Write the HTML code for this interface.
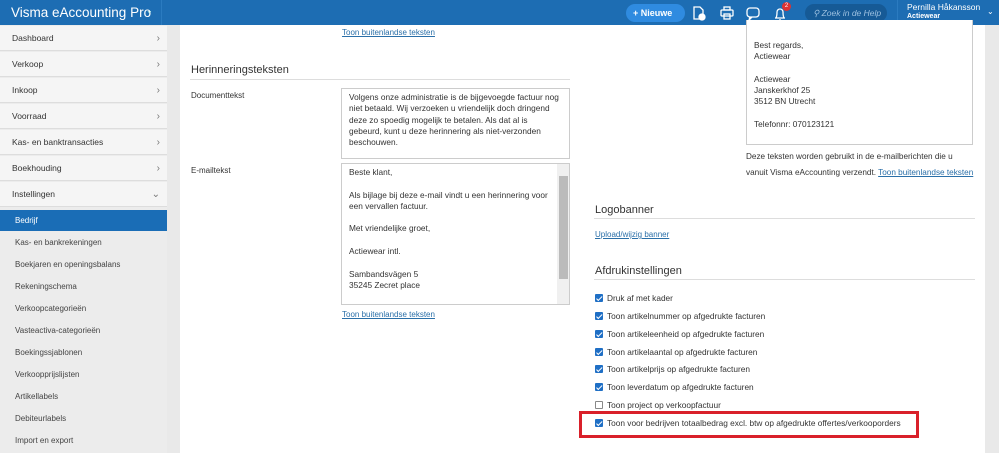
<!DOCTYPE html>
<html><head><meta charset="utf-8"><style>
*{box-sizing:border-box;margin:0;padding:0}
body{width:999px;height:453px;overflow:hidden;font-family:"Liberation Sans",sans-serif;font-size:9px;color:#333;background:#e9e9e9;position:relative}
.abs{position:absolute}
.hdr{left:0;top:0;width:999px;height:25px;background:#1d6db3}
.side{left:0;top:25px;width:167px;height:428px;background:#ececec}
.it{position:absolute;left:0;width:167px;height:25px;background:#f5f5f5;border-bottom:1px solid #ddd;padding-left:12px;line-height:25px;font-size:8.5px;color:#333}
.it span{position:absolute;right:7px;top:0;color:#777;font-size:10px}
.sub{position:absolute;left:15px;font-size:8px;color:#444}
.main{left:180px;top:25px;width:805px;height:428px;background:#fff}
.lnk{color:#2a6fa8;text-decoration:underline;font-size:8px;position:absolute}
.h{position:absolute;font-size:11px;color:#333}
.ln{position:absolute;height:1px;background:#ddd}
.ta{position:absolute;border:1px solid #ccc;background:#fff;font-size:8.3px;line-height:11.3px;padding:3px 7px;color:#333;overflow:hidden}
.cb{position:absolute;left:595px;font-size:8.3px;color:#333}
.cb i{display:inline-block;width:8px;height:8px;background:#1f6fc5;border-radius:1px;vertical-align:-1px;margin-right:4px;position:relative}
.cb i:after{content:"";position:absolute;left:2.5px;top:0.5px;width:2px;height:4.5px;border:solid #fff;border-width:0 1.3px 1.3px 0;transform:rotate(45deg)}
.cb i.e{background:#fff;border:1px solid #888}
.cb i.e:after{display:none}
</style></head><body>
<div class="abs hdr">
 <div class="abs" style="left:11px;top:5px;color:#fff;font-size:13.5px">Visma eAccounting Pro</div>
 <div class="abs" style="left:146px;top:6px;color:#cfe;font-size:8px">⌄</div>
 <div class="abs" style="left:161px;top:0;width:1px;height:25px;background:#2b7bc0"></div>
 <div class="abs" style="left:626px;top:4px;width:59px;height:18px;border-radius:9px;background:#2f8be0;color:#fff;font-size:9px;font-weight:bold;line-height:18px;padding-left:7px">+ Nieuwe</div>
 <svg class="abs" style="left:691px;top:4px" width="100" height="18" viewBox="0 0 100 18" fill="none" stroke="#fff" stroke-width="1.3">
  <path d="M3 3h6l3 3v9H3z"/><circle cx="11" cy="13" r="3" fill="#fff"/>
  <rect x="30" y="6" width="12" height="6" rx="1"/><rect x="33" y="3" width="6" height="3"/><rect x="33" y="10" width="6" height="5"/>
  <rect x="56" y="4" width="12" height="9" rx="3"/><path d="M59 13l-1 3 3-3"/>
  <path d="M84 14h10M85 14c1-2 1-4 1-6a3 3 0 0 1 6 0c0 2 0 4 1 6M88 16h2"/>
 </svg>
 <div class="abs" style="left:782px;top:2px;width:9px;height:9px;border-radius:50%;background:#d33;color:#fff;font-size:6px;text-align:center;line-height:9px">2</div>
 <div class="abs" style="left:805px;top:4px;width:82px;height:18px;border-radius:9px;background:#165a96;color:#9cc0e0;font-size:8.5px;font-style:italic;line-height:18px;padding-left:8px">⚲ Zoek in de Help</div>
 <div class="abs" style="left:897px;top:0;width:1px;height:25px;background:#2b7bc0"></div>
 <div class="abs" style="left:907px;top:2px;color:#fff;font-size:8.5px">Pernilla Håkansson</div>
 <div class="abs" style="left:907px;top:13px;color:#fff;font-size:7px;font-weight:bold">Actiewear</div>
 <div class="abs" style="left:987px;top:7px;color:#fff;font-size:8px">⌄</div>
</div>
<div class="abs side">
 <div class="it" style="top:1px">Dashboard<span>›</span></div>
 <div class="it" style="top:27px">Verkoop<span>›</span></div>
 <div class="it" style="top:53px">Inkoop<span>›</span></div>
 <div class="it" style="top:79px">Voorraad<span>›</span></div>
 <div class="it" style="top:105px">Kas- en banktransacties<span>›</span></div>
 <div class="it" style="top:131px">Boekhouding<span>›</span></div>
 <div class="it" style="top:157px">Instellingen<span>⌄</span></div>
 <div class="abs" style="left:0;top:185px;width:167px;height:21px;background:#1a6db6;color:#fff;padding-left:15px;line-height:21px;font-size:8px">Bedrijf</div>
 <div class="sub" style="top:213px">Kas- en bankrekeningen</div>
 <div class="sub" style="top:235px">Boekjaren en openingsbalans</div>
 <div class="sub" style="top:257px">Rekeningschema</div>
 <div class="sub" style="top:279px">Verkoopcategorieën</div>
 <div class="sub" style="top:301px">Vasteactiva-categorieën</div>
 <div class="sub" style="top:323px">Boekingssjablonen</div>
 <div class="sub" style="top:345px">Verkoopprijslijsten</div>
 <div class="sub" style="top:367px">Artikellabels</div>
 <div class="sub" style="top:389px">Debiteurlabels</div>
 <div class="sub" style="top:411px">Import en export</div>
</div>
<div class="abs main"></div>
<div class="lnk" style="left:342px;top:28px">Toon buitenlandse teksten</div>
<div class="h" style="left:191px;top:64px">Herinneringsteksten</div>
<div class="ln" style="left:190px;top:79px;width:380px"></div>
<div class="abs" style="left:191px;top:91px;font-size:8px">Documenttekst</div>
<div class="ta" style="left:341px;top:88px;width:229px;height:71px;padding-top:3px">Volgens onze administratie is de bijgevoegde factuur nog niet betaald. Wij verzoeken u vriendelijk doch dringend deze zo spoedig mogelijk te betalen. Als dat al is gebeurd, kunt u deze herinnering als niet-verzonden beschouwen.</div>
<div class="abs" style="left:191px;top:166px;font-size:8px">E-mailtekst</div>
<div class="ta" style="left:341px;top:163px;width:229px;height:142px;padding-right:20px">Beste klant,<br><br>Als bijlage bij deze e-mail vindt u een herinnering voor een vervallen factuur.<br><br>Met vriendelijke groet,<br><br>Actiewear intl.<br><br>Sambandsvägen 5<br>35245 Zecret place<br><br>Tel.: 070123121</div>
<div class="abs" style="left:557px;top:164px;width:12px;height:140px;background:#f0f0f0"></div>
<div class="abs" style="left:559px;top:176px;width:9px;height:103px;background:#bbb"></div>
<div class="lnk" style="left:342px;top:310px">Toon buitenlandse teksten</div>

<div class="ta" style="left:746px;top:20px;width:227px;height:125px;border-top:none;padding-top:20px">Best regards,<br>Actiewear<br><br>Actiewear<br>Janskerkhof 25<br>3512 BN Utrecht<br><br>Telefonnr: 070123121</div>
<div class="abs" style="left:746px;top:149px;width:228px;font-size:8.2px;line-height:16px">Deze teksten worden gebruikt in de e-mailberichten die u vanuit Visma eAccounting verzendt. <span style="color:#2a6fa8;text-decoration:underline">Toon buitenlandse teksten</span></div>

<div class="h" style="left:595px;top:204px">Logobanner</div>
<div class="ln" style="left:594px;top:218px;width:381px"></div>
<div class="lnk" style="left:595px;top:230px">Upload/wijzig banner</div>
<div class="h" style="left:595px;top:265px">Afdrukinstellingen</div>
<div class="ln" style="left:594px;top:279px;width:381px"></div>
<div class="cb" style="top:293px"><i></i>Druk af met kader</div>
<div class="cb" style="top:311px"><i></i>Toon artikelnummer op afgedrukte facturen</div>
<div class="cb" style="top:329px"><i></i>Toon artikeleenheid op afgedrukte facturen</div>
<div class="cb" style="top:347px"><i></i>Toon artikelaantal op afgedrukte facturen</div>
<div class="cb" style="top:364px"><i></i>Toon artikelprijs op afgedrukte facturen</div>
<div class="cb" style="top:382px"><i></i>Toon leverdatum op afgedrukte facturen</div>
<div class="cb" style="top:400px"><i class="e"></i>Toon project op verkoopfactuur</div>
<div class="cb" style="top:418px"><i></i>Toon voor bedrijven totaalbedrag excl. btw op afgedrukte offertes/verkooporders</div>
<div class="abs" style="left:579px;top:411px;width:340px;height:27px;border:3px solid #d9202a"></div>
</body></html>
